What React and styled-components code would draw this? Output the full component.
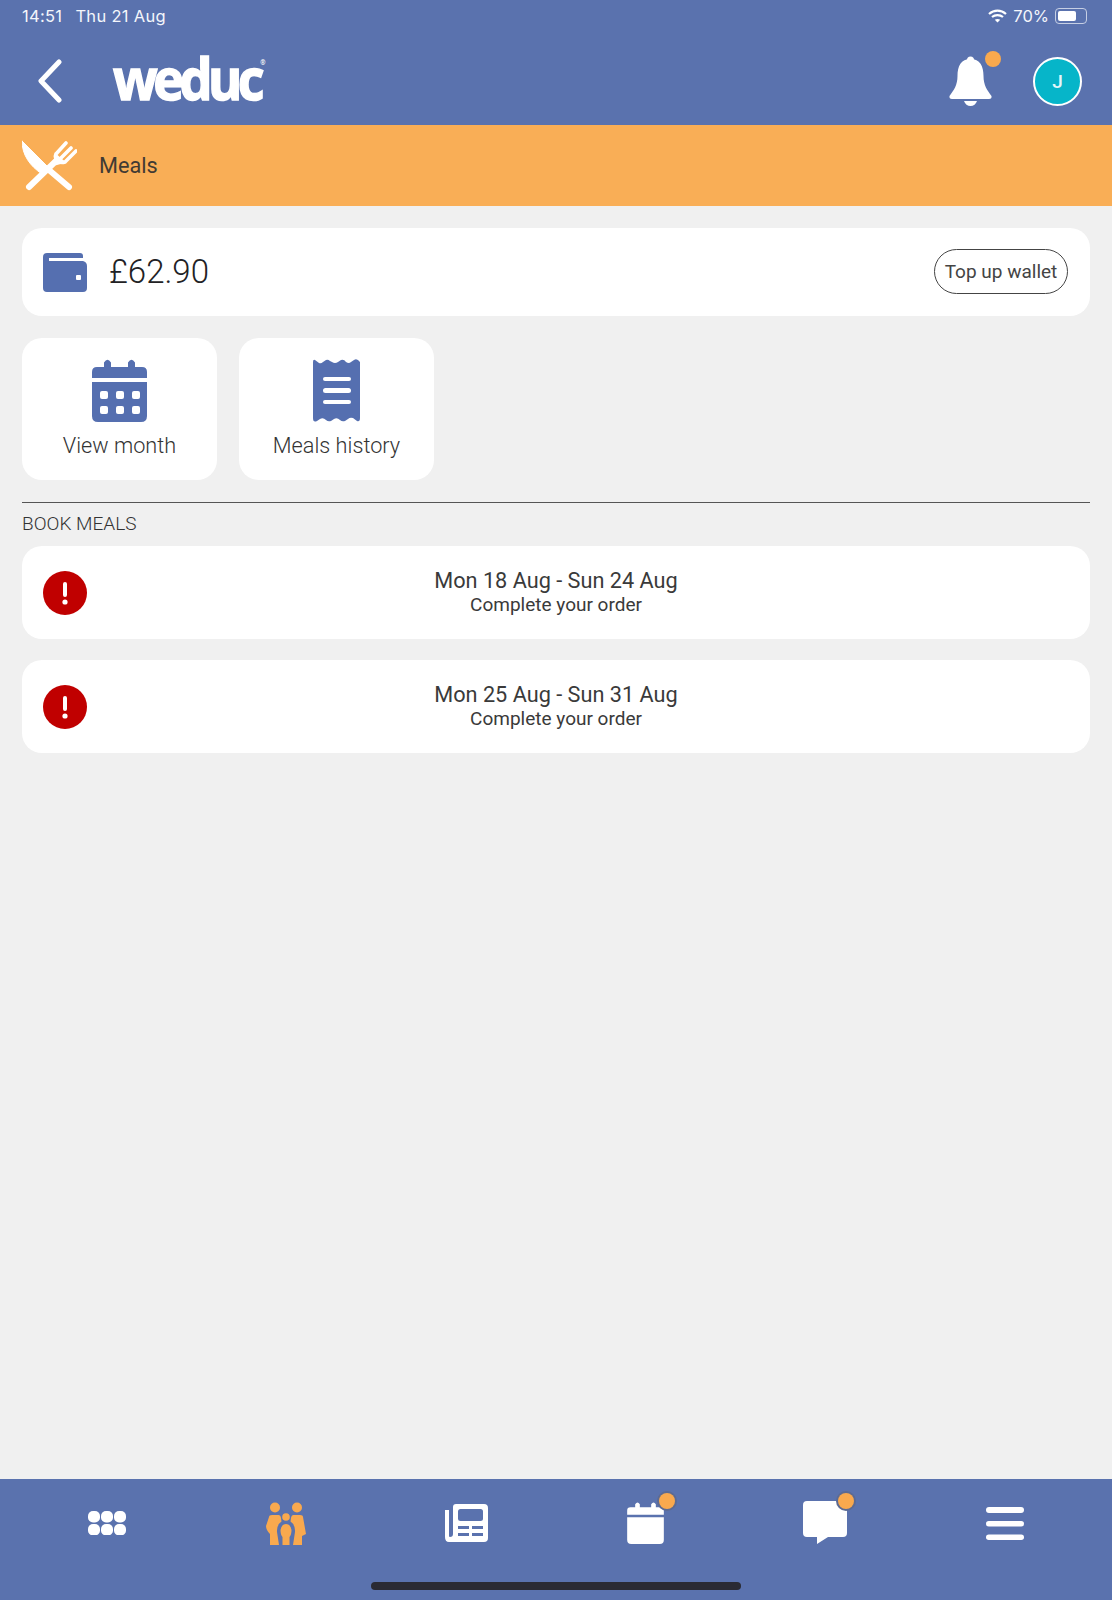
import React from "react";
import styled, { createGlobalStyle } from "styled-components";

const GlobalStyle = createGlobalStyle`
  html, body { margin: 0; padding: 0; background: #f0f0f0; }
  * { box-sizing: border-box; }
`;

const Page = styled.div`
  width: 1112px;
  height: 1600px;
  display: flex;
  flex-direction: column;
  background: #f0f0f0;
  font-family: Roboto, "Liberation Sans", sans-serif;
  overflow: hidden;
`;

const Header = styled.header`
  height: 125px;
  background: #5a72ae;
  display: flex;
  flex-direction: column;
`;

const StatusBar = styled.div`
  height: 32px;
  padding: 0 22px;
  display: flex;
  align-items: center;
  justify-content: space-between;
  font-family: Inter, "Liberation Sans", sans-serif;
  font-size: 16.5px;
  color: #f4f6fb;
`;

const StatusGroup = styled.div`
  display: flex;
  align-items: center;
  gap: ${(p) => p.$gap || 13}px;
  letter-spacing: ${(p) => p.$tracking || 0}px;
`;

const Battery = styled.div`
  width: 32px;
  height: 16px;
  border: 1px solid #c6cfe4;
  border-radius: 4px;
  padding: 2px;
  display: flex;
  margin-right: 3px;
`;

const BatteryFill = styled.div`
  width: 70%;
  background: #fff;
  border-radius: 2px;
`;

const NavBar = styled.div`
  flex: 1;
  padding: 5px 30px 0 37px;
  display: flex;
  align-items: center;
`;

const Logo = styled.div`
  margin-left: 50px;
  position: relative;
  top: -3px;
  font-family: "Open Sans", sans-serif;
  font-weight: 700;
  font-size: 58px;
  line-height: 62px;
  letter-spacing: -5px;
  color: #fff;
  -webkit-text-stroke: 1.5px #fff;
  transform: scaleX(0.9);
  transform-origin: left center;
`;

const LogoMark = styled.span`
  font-size: 7px;
  letter-spacing: 0;
  -webkit-text-stroke: 0;
  position: absolute;
  top: 12px;
  right: -6px;
  line-height: 8px;
`;

const NavRight = styled.div`
  margin-left: auto;
  display: flex;
  align-items: center;
  gap: 41px;
`;

const BadgeWrap = styled.div`
  position: relative;
  display: flex;
`;

const Badge = styled.span`
  position: absolute;
  width: 16px;
  height: 16px;
  border-radius: 50%;
  background: #f9a94e;
  top: ${(p) => p.$top}px;
  right: ${(p) => p.$right}px;
  box-shadow: ${(p) => (p.$ring ? "0 0 0 2px #5c6a92" : "none")};
`;

const Avatar = styled.div`
  width: 49px;
  height: 49px;
  border-radius: 50%;
  background: #06b5c9;
  border: 2px solid #fff;
  color: #e4f7fa;
  font-size: 19px;
  font-weight: 500;
  display: flex;
  align-items: center;
  justify-content: center;
`;

const TitleBar = styled.div`
  height: 81px;
  background: #f9ae56;
  padding: 0 22px;
  display: flex;
  align-items: center;
  gap: 22px;
`;

const Title = styled.div`
  font-size: 21.7px;
  color: #413a33;
`;

const Content = styled.main`
  flex: 1;
  padding: 22px;
  display: flex;
  flex-direction: column;
`;

const Card = styled.div`
  background: #fff;
  border-radius: 20px;
`;

const WalletCard = styled(Card)`
  height: 88px;
  padding: 0 22px 0 21px;
  display: flex;
  align-items: center;
  gap: 22px;
`;

const Amount = styled.div`
  font-size: 33px;
  font-weight: 300;
  line-height: 38px;
  margin-top: -1px;
  color: #222224;
  flex: 1;
`;

const TopUp = styled.button`
  height: 45px;
  width: 134px;
  margin-top: -1px;
  border: 1px solid #444;
  border-radius: 23px;
  background: #fff;
  font-family: inherit;
  font-size: 19px;
  color: #444;
  padding: 0;
`;

const TileRow = styled.div`
  margin-top: 22px;
  display: flex;
  gap: 22px;
`;

const Tile = styled(Card)`
  width: 195px;
  height: 142px;
  padding-top: 21px;
  display: flex;
  flex-direction: column;
  align-items: center;
  gap: 11px;
`;

const TileLabel = styled.div`
  font-size: 21.7px;
  font-weight: 300;
  line-height: 26px;
  color: #333;
`;

const Divider = styled.hr`
  margin: 22px 0 0;
  border: 0;
  border-top: 1px solid #555;
`;

const SectionLabel = styled.div`
  margin: 10px 0 12px;
  font-size: 19px;
  font-weight: 300;
  line-height: 21px;
  color: #333;
`;

const WeekList = styled.div`
  display: flex;
  flex-direction: column;
  gap: 21px;
`;

const WeekRow = styled(Card)`
  height: 93px;
  padding: 0 21px;
  display: grid;
  grid-template-columns: 44px 1fr 44px;
  align-items: center;
`;

const WeekText = styled.div`
  text-align: center;
  padding-bottom: 2px;
`;

const WeekDates = styled.div`
  font-size: 21.7px;
  line-height: 26px;
  color: #3a3a3a;
`;

const WeekStatus = styled.div`
  font-size: 19px;
  line-height: 22px;
  color: #3a3a3a;
`;

const BottomBar = styled.footer`
  height: 121px;
  background: #5a72ae;
  display: flex;
  flex-direction: column;
`;

const TabRow = styled.nav`
  height: 88px;
  padding: 0 17px;
  display: grid;
  grid-template-columns: repeat(6, 1fr);
`;

const Tab = styled.div`
  display: flex;
  align-items: center;
  justify-content: center;
`;

const HomeBar = styled.div`
  width: 370px;
  height: 8px;
  margin: 15px auto 0;
  border-radius: 4px;
  background: #2a2a33;
`;

const BLUE = "#556fb0";

const BackIcon = () => (
  <svg width="26" height="44" viewBox="0 0 26 44">
    <path d="M22 3 L4 22 L22 41" fill="none" stroke="#fff" strokeWidth="5" strokeLinecap="round" strokeLinejoin="round" />
  </svg>
);

const WifiIcon = () => (
  <svg width="19" height="14" viewBox="0 0 19 14" fill="none" stroke="#fff" strokeWidth="2.2">
    <path d="M1 5 C6 0.5 13 0.5 18 5" />
    <path d="M4 8 C7 5.5 12 5.5 15 8" />
    <path d="M9.5 13.5 L6.8 10.8 C8.4 9.6 10.6 9.6 12.2 10.8 Z" fill="#fff" stroke="none" />
  </svg>
);

const BellIcon = () => (
  <svg width="43" height="50" viewBox="0 0 43 50" fill="#fff">
    <circle cx="21.5" cy="4" r="3.5" />
    <path d="M21.5 3 C31 3 34.5 10 34.5 20 C34.5 29 38 34 42.5 40 Q43 43 40 43 L3 43 Q0 43 .5 40 C5 34 8.5 29 8.5 20 C8.5 10 12 3 21.5 3 Z" />
    <path d="M15 45 L28 45 C27 48 24.5 50 21.5 50 C18.5 50 16 48 15 45 Z" />
  </svg>
);

const MealsIcon = () => (
  <svg width="55" height="51" viewBox="0 0 55 51" fill="none" stroke="#fff" strokeLinecap="round">
    <path d="M0 1 L26 27 L20 34 C8 26 0 15 0 1 Z" fill="#fff" stroke="#fff" strokeWidth="1" strokeLinejoin="round" />
    <path d="M27 30 L47 47" strokeWidth="6" />
    <path d="M7 47 L35 20" strokeWidth="6" />
    <path d="M34 14 L44 3 M39 18 L49 8 M43 22 L54 11 M34 14 C32 18 36 24 43 22" strokeWidth="3.6" />
    <path d="M34 15 L42 22 L35 24 Z" fill="#fff" strokeWidth="2" />
  </svg>
);

const WalletIcon = () => (
  <svg width="44" height="39" viewBox="0 0 44 39">
    <path d="M4 0 L37 0 Q40 0 40 3 L40 5 L6 5 L6 8 L40 8 Q44 9 44 13 L44 35 Q44 39 40 39 L4 39 Q0 39 0 35 L0 4 Q0 0 4 0 Z" fill={BLUE} />
    <rect x="33" y="22" width="5" height="5" rx="1" fill="#fff" />
  </svg>
);

const CalendarIcon = ({ color = BLUE, dots = true, width = 55, height = 63 }) => (
  <svg width={width} height={height} viewBox="0 0 55 63">
    <path d="M12 8 L12 3.5 Q15.5 -2 19 3.5 L19 8 L36 8 L36 3.5 Q39.5 -2 43 3.5 L43 8 L50 8 Q55 8 55 13 L55 19 L0 19 L0 13 Q0 8 5 8 Z" fill={color} />
    <path d="M0 23 L55 23 L55 57 Q55 63 49 63 L6 63 Q0 63 0 57 Z" fill={color} />
    {dots &&
      [32, 47].map((y) =>
        [8, 24, 40].map((x) => <rect key={`${x}-${y}`} x={x} y={y} width="8" height="8" rx="2" fill="#fff" />)
      )}
  </svg>
);

const ReceiptIcon = () => (
  <svg width="47" height="63" viewBox="0 0 47 63">
    <path
      d="M0 3 Q0 0 2 1 L6 4 Q8 5 10 3 L13 1 Q15 0 17 2 L19 3 Q22 5 25 3 L28 1 Q31 0 33 3 Q36 5 38 3 L41 1 Q44 -1 47 3 L47 59 Q47 63 44 62 L40 59 Q37 58 35 60 L32 62 Q29 63 27 61 Q24 58 21 60 L18 62 Q15 63 13 61 Q10 58 7 60 L4 62 Q0 64 0 59 Z"
      fill={BLUE}
    />
    <rect x="10" y="18" width="28" height="4" rx="2" fill="#fff" />
    <rect x="10" y="29" width="28" height="5" rx="2.5" fill="#fff" />
    <rect x="10" y="41" width="28" height="4" rx="2" fill="#fff" />
  </svg>
);

const AlertIcon = () => (
  <svg width="44" height="44" viewBox="0 0 44 44">
    <circle cx="22" cy="22" r="22" fill="#c00000" />
    <rect x="20" y="11" width="4" height="15" rx="2" fill="#fff" />
    <circle cx="22" cy="31" r="2.6" fill="#fff" />
  </svg>
);

const AppsIcon = () => (
  <svg width="38" height="24" viewBox="0 0 38 24" fill="#fff">
    {[0, 13, 26].map((x) =>
      [0, 13].map((y) => <rect key={`${x}-${y}`} x={x} y={y} width="12" height="11.5" rx="5" />)
    )}
  </svg>
);

const FamilyIcon = () => (
  <svg width="40" height="43" viewBox="0 0 40 43" fill="#f9a94e">
    <circle cx="9" cy="5.5" r="5" />
    <circle cx="31" cy="5.5" r="5" />
    <circle cx="20" cy="15" r="3.8" />
    <path d="M3 15 Q3 13 6 13 L12.5 13 Q14.5 13 15 16 L15.5 19.5 Q10.5 23 11 30 L13 43 L4 43 L4 32 Q0 28 0 24 Z" />
    <path d="M37 15 Q37 13 34 13 L27.5 13 Q25.5 13 25 16 L24.5 19.5 Q29.5 23 29 30 L27 43 L36 43 L36 34 L40 32 Z" />
    <path d="M20 22 Q24.5 22 25.5 28 Q25.5 33 23.5 35 L23.5 43 L16.5 43 L16.5 35 Q14.5 33 14.5 28 Q15.5 22 20 22 Z" />
  </svg>
);

const NewsIcon = () => (
  <svg width="43" height="39" viewBox="0 0 43 39">
    <path d="M8 3 Q8 0 11 0 L39 0 Q43 0 43 4 L43 34 Q43 38 39 38 L4 38 Q0 38 0 33 L0 6 L4 6 L4 32 Q4 33 5 33 Q8 33 8 30 Z" fill="#fff" />
    <rect x="13" y="5" width="25" height="12" rx="2.5" fill="#5a72ae" />
    <rect x="13" y="22" width="11" height="3" fill="#5a72ae" />
    <rect x="27" y="22" width="11" height="3" fill="#5a72ae" />
    <rect x="13" y="29" width="11" height="3" fill="#5a72ae" />
    <rect x="27" y="29" width="11" height="3" fill="#5a72ae" />
  </svg>
);

const ChatIcon = () => (
  <svg width="44" height="44" viewBox="0 0 44 44" fill="#fff">
    <path d="M4 0 L40 0 Q44 0 44 4 L44 32 Q44 36 40 36 L25 36 L14 43 L14 36 L4 36 Q0 36 0 32 L0 4 Q0 0 4 0 Z" />
  </svg>
);

const MenuIcon = () => (
  <svg width="38" height="33" viewBox="0 0 38 33" fill="#fff">
    <rect y="0" width="38" height="6" rx="3" />
    <rect y="14" width="38" height="5.5" rx="2.75" />
    <rect y="27.5" width="38" height="5.5" rx="2.75" />
  </svg>
);

const weeks = [
  { id: 1, dates: "Mon 18 Aug - Sun 24 Aug" },
  { id: 2, dates: "Mon 25 Aug - Sun 31 Aug" },
];

export default function App() {
  return (
    <Page>
      <GlobalStyle />
      <Header>
        <StatusBar>
          <StatusGroup $tracking={0.3}>
            <span>14:51</span>
            <span>Thu 21 Aug</span>
          </StatusGroup>
          <StatusGroup $gap={6}>
            <WifiIcon />
            <span>70%</span>
            <Battery>
              <BatteryFill />
            </Battery>
          </StatusGroup>
        </StatusBar>
        <NavBar>
          <BackIcon />
          <Logo>
            weduc
            <LogoMark>®</LogoMark>
          </Logo>
          <NavRight>
            <BadgeWrap>
              <BellIcon />
              <Badge $top={-5} $right={-9} />
            </BadgeWrap>
            <Avatar>J</Avatar>
          </NavRight>
        </NavBar>
      </Header>

      <TitleBar>
        <MealsIcon />
        <Title>Meals</Title>
      </TitleBar>

      <Content>
        <WalletCard>
          <WalletIcon />
          <Amount>£62.90</Amount>
          <TopUp>Top up wallet</TopUp>
        </WalletCard>

        <TileRow>
          <Tile>
            <CalendarIcon />
            <TileLabel>View month</TileLabel>
          </Tile>
          <Tile>
            <ReceiptIcon />
            <TileLabel>Meals history</TileLabel>
          </Tile>
        </TileRow>

        <Divider />
        <SectionLabel>BOOK MEALS</SectionLabel>

        <WeekList>
          {weeks.map((week) => (
            <WeekRow key={week.id}>
              <AlertIcon />
              <WeekText>
                <WeekDates>{week.dates}</WeekDates>
                <WeekStatus>Complete your order</WeekStatus>
              </WeekText>
            </WeekRow>
          ))}
        </WeekList>
      </Content>

      <BottomBar>
        <TabRow>
          <Tab>
            <AppsIcon />
          </Tab>
          <Tab>
            <FamilyIcon />
          </Tab>
          <Tab>
            <NewsIcon />
          </Tab>
          <Tab>
            <BadgeWrap>
              <CalendarIcon color="#fff" dots={false} width={37} height={42} />
              <Badge $top={-9} $right={-11} $ring />
            </BadgeWrap>
          </Tab>
          <Tab>
            <BadgeWrap>
              <ChatIcon />
              <Badge $top={-8} $right={-7} $ring />
            </BadgeWrap>
          </Tab>
          <Tab>
            <MenuIcon />
          </Tab>
        </TabRow>
        <HomeBar />
      </BottomBar>
    </Page>
  );
}
